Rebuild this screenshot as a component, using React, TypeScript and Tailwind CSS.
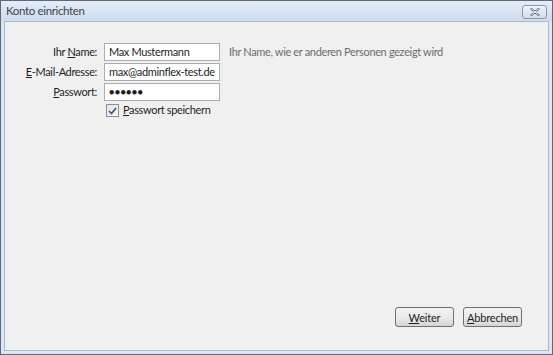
export default function App() {
  return (
    <div
      className="w-[553px] h-[355px] flex flex-col border border-[#5f6a76] bg-[#dbe6f3] text-[11px] tracking-[-0.35px] text-[#1e1e1e]"
      style={{ fontFamily: 'Lato, "Open Sans", sans-serif' }}
    >
      {/* Title bar */}
      <div className="h-[20px] flex items-center justify-between pl-[5px] pr-[5px] bg-gradient-to-b from-[#e4edf7] to-[#cddcee]">
        <span className="text-[11.5px] text-[#3c4450] leading-none">Konto einrichten</span>
        <button className="w-[25px] h-[14px] mt-[1px] flex items-center justify-center rounded-[3px] border border-[#8c97a3] bg-gradient-to-b from-[#eef3f9] to-[#d3deea]">
          <svg width="10" height="8" viewBox="0 0 10 8">
            <path d="M1.5 1 L8.5 7 M8.5 1 L1.5 7" stroke="#5b6470" strokeWidth="2.2" strokeLinecap="round" />
            <path d="M1.5 1 L8.5 7 M8.5 1 L1.5 7" stroke="#ffffff" strokeWidth="0.9" strokeLinecap="round" />
          </svg>
        </button>
      </div>

      {/* Body */}
      <div className="flex-1 mx-[3px] mb-[3px] border border-[#aab8c8] bg-[#f0f0f0] flex flex-col">
        <div className="pt-[21px] pl-[11px] flex flex-col gap-[2px]">
          <Row label={<><span>Ihr </span><u>N</u>ame:</>} value="Max Mustermann" hint="Ihr Name, wie er anderen Personen gezeigt wird" />
          <Row label={<><u>E</u>-Mail-Adresse:</>} value="max@adminflex-test.de" />
          <Row label={<><u>P</u>asswort:</>} value="●●●●●●" password />
          <div className="flex items-center pl-[90px] h-[15px]">
            <div className="w-[13px] h-[13px] border border-[#8e8f8f] bg-gradient-to-br from-[#dfe3ea] to-[#f6f6f6] flex items-center justify-center">
              <svg width="9" height="8" viewBox="0 0 9 8">
                <path d="M1 4 L3.5 6.5 L8 1" fill="none" stroke="#3a4f84" strokeWidth="1.6" />
              </svg>
            </div>
            <span className="ml-[4px]"><u>P</u>asswort speichern</span>
          </div>
        </div>

        <div className="flex-1" />

        <div className="flex justify-end gap-[9px] pr-[26px] pb-[23px]">
          <Btn><u>W</u>eiter</Btn>
          <Btn><u>A</u>bbrechen</Btn>
        </div>
      </div>
    </div>
  );
}

function Row({
  label,
  value,
  hint,
  password,
}: {
  label: React.ReactNode;
  value: string;
  hint?: string;
  password?: boolean;
}) {
  return (
    <div className="flex items-center h-[18px]">
      <div className="w-[81px] text-right whitespace-nowrap">{label}</div>
      <div className="ml-[7px] w-[116px] h-[18px] border border-[#abadb3] bg-white flex items-center pl-[4px] whitespace-nowrap overflow-hidden">
        <span className={password ? "text-[9px] tracking-[0.3px]" : ""}>{value}</span>
      </div>
      {hint && <span className="ml-[9px] text-[#6d6d6d] whitespace-nowrap">{hint}</span>}
    </div>
  );
}

function Btn({ children }: { children: React.ReactNode }) {
  return (
    <button className="w-[59px] h-[20px] rounded-[3px] border border-[#707070] bg-gradient-to-b from-[#f2f2f2] via-[#ebebeb] to-[#d5d5d5] text-[11px] tracking-[-0.2px] text-[#1e1e1e] leading-none">
      {children}
    </button>
  );
}
